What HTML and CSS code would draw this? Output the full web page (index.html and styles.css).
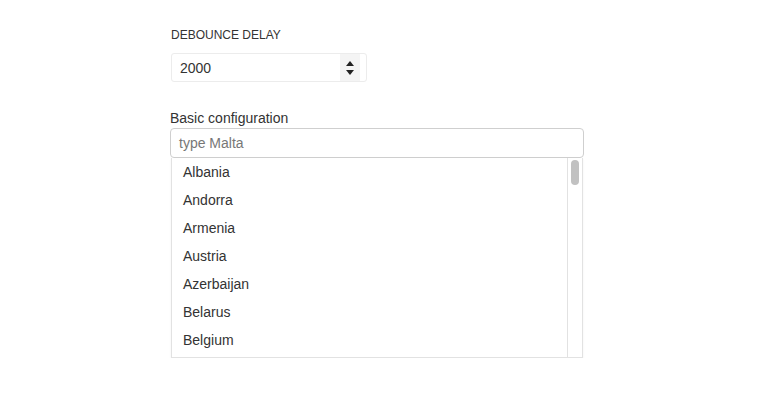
FILE: index.html
```html
<!DOCTYPE html>
<html>
<head>
<meta charset="utf-8">
<link rel="stylesheet" href="styles.css">
</head>
<body>
<div class="page">
  <div class="field-label">DEBOUNCE DELAY</div>
  <div class="number-input">
    <span class="number-value">2000</span>
    <span class="spin">
      <span class="arrow up"></span>
      <span class="arrow down"></span>
    </span>
  </div>
  <div class="config-label">Basic configuration</div>
  <div class="search-input">type Malta</div>
  <div class="dropdown">
    <ul class="options">
      <li>Albania</li>
      <li>Andorra</li>
      <li>Armenia</li>
      <li>Austria</li>
      <li>Azerbaijan</li>
      <li>Belarus</li>
      <li>Belgium</li>
    </ul>
    <div class="scrollbar"><div class="thumb"></div></div>
  </div>
</div>
</body>
</html>
```
FILE: styles.css
```css
html, body {
  margin: 0;
  padding: 0;
  background: #fff;
}
body {
  font-family: "Liberation Sans", Arial, sans-serif;
  color: #333;
}
.page {
  padding: 28px 0 0 170px;
  width: 414px;
}
.field-label {
  font-size: 12px;
  line-height: 15px;
  color: #333;
  padding-left: 1px;
}
.number-input {
  margin-top: 10px;
  margin-left: 1px;
  width: 194px;
  height: 27px;
  border: 1px solid #ececec;
  border-radius: 3px;
  display: flex;
  align-items: center;
  justify-content: space-between;
}
.number-value {
  font-size: 14px;
  padding-left: 8px;
  color: #333;
}
.spin {
  width: 20px;
  height: 27px;
  margin-right: 6px;
  background: #f4f4f4;
  display: flex;
  flex-direction: column;
  align-items: center;
  justify-content: center;
  gap: 4px;
}
.arrow {
  width: 0;
  height: 0;
  border-left: 4px solid transparent;
  border-right: 4px solid transparent;
}
.arrow.up { border-bottom: 5px solid #222; }
.arrow.down { border-top: 5px solid #222; }
.config-label {
  margin-top: 28px;
  font-size: 14px;
  line-height: 16px;
  color: #333;
}
.search-input {
  margin-top: 2px;
  height: 28px;
  border: 1px solid #cfcfcf;
  border-radius: 4px;
  padding-left: 8px;
  font-size: 14px;
  line-height: 28px;
  color: #777;
}
.dropdown {
  margin: 0 1px;
  height: 199px;
  border: 1px solid #e2e2e2;
  border-top: none;
  display: flex;
  overflow: hidden;
  box-shadow: 0 1px 2px rgba(0,0,0,0.06);
}
.options {
  list-style: none;
  margin: 0;
  padding: 0;
  flex: 1;
}
.options li {
  height: 28px;
  line-height: 28px;
  padding-left: 11px;
  font-size: 14px;
  color: #333;
}
.scrollbar {
  width: 14px;
  border-left: 1px solid #e2e2e2;
  display: flex;
  justify-content: center;
  padding-top: 2px;
}
.thumb {
  width: 8px;
  height: 25px;
  background: #c1c1c1;
  border-radius: 4px;
}
```
